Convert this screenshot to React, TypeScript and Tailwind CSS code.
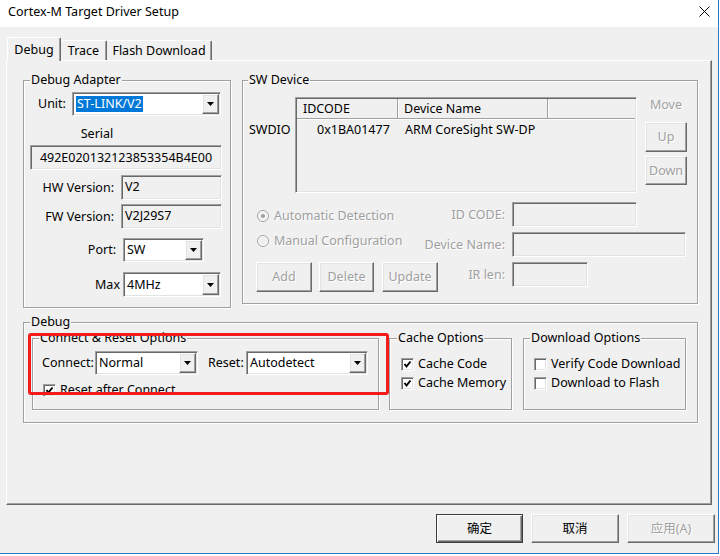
import React from "react";

const SUNKEN =
  "border border-t-[#a0a0a0] border-l-[#a0a0a0] border-r-white border-b-white shadow-[inset_1px_1px_0_#696969,inset_-1px_-1px_0_#e3e3e3]";
const RAISED =
  "border border-t-white border-l-white border-r-[#696969] border-b-[#696969] shadow-[inset_-1px_-1px_0_#a0a0a0,inset_1px_1px_0_#e3e3e3] bg-[#f0f0f0]";
const DIS = "text-[#a0a0a0] [text-shadow:1px_1px_0_#ffffff]";

function Arrow() {
  return (
    <svg width="7" height="4" viewBox="0 0 7 4">
      <polygon points="0,0 7,0 3.5,4" fill="#000" />
    </svg>
  );
}

function Combo({ className, children }: { className: string; children: React.ReactNode }) {
  return (
    <div className={`${SUNKEN} bg-white p-[1px] flex ${className}`}>
      <div className="flex-1 flex items-center pl-[2px] overflow-hidden whitespace-nowrap">{children}</div>
      <div className={`${RAISED} w-[17px] h-full flex items-center justify-center`}>
        <Arrow />
      </div>
    </div>
  );
}

function Group({
  className,
  label,
  legendClass,
  children,
}: {
  className: string;
  label: string;
  legendClass: string;
  children?: React.ReactNode;
}) {
  return (
    <div className={`relative border border-[#a0a0a0] shadow-[inset_1px_1px_0_#ffffff,1px_1px_0_#ffffff] ${className}`}>
      <span className={`absolute bg-[#f0f0f0] px-[1px] leading-[16px] whitespace-nowrap ${legendClass}`}>{label}</span>
      {children}
    </div>
  );
}

function Check({ checked }: { checked: boolean }) {
  return (
    <div className={`${SUNKEN} bg-white w-[13px] h-[13px] flex items-center justify-center shrink-0`}>
      {checked && (
        <svg width="9" height="9" viewBox="0 0 9 9">
          <polyline points="1.5,4 3.5,6.5 7.5,1.5" fill="none" stroke="#000" strokeWidth="2" />
        </svg>
      )}
    </div>
  );
}

function Radio({ on }: { on: boolean }) {
  return (
    <svg width="12" height="12" viewBox="0 0 12 12" className="shrink-0">
      <circle cx="6" cy="6" r="5.5" fill="#f0f0f0" stroke="#a0a0a0" />
      <circle cx="6" cy="6" r="4.5" fill="none" stroke="#fff" strokeWidth="0.6" />
      {on && <circle cx="6" cy="6" r="2" fill="#a0a0a0" />}
    </svg>
  );
}

function Btn({ className, children, def }: { className: string; children: React.ReactNode; def?: boolean }) {
  if (def) {
    return (
      <div
        className={`border border-[#3c3c3c] bg-[#f0f0f0] shadow-[inset_1px_1px_0_#ffffff,inset_-1px_-1px_0_#696969,inset_-2px_-2px_0_#a0a0a0] flex items-center justify-center ${className}`}
      >
        {children}
      </div>
    );
  }
  return <div className={`${RAISED} flex items-center justify-center ${className}`}>{children}</div>;
}

export default function App() {
  return (
    <div className="relative w-[720px] h-[556px] bg-white text-black text-[12.5px] leading-[16px] font-['Noto_Sans','Noto_Sans_CJK_SC',sans-serif]">
      <div className="w-[719px] h-[554px] border-r border-b border-[#2b79c2] bg-[#f0f0f0] flex flex-col">
        {/* title bar */}
        <div className="h-[27px] bg-white flex items-center justify-between pl-[8px] pr-[8px] pb-[4px] shrink-0">
          <span className="text-[12.5px]">Cortex-M Target Driver Setup</span>
          <svg width="11" height="11" viewBox="0 0 11 11">
            <line x1="0.5" y1="0.5" x2="10.5" y2="10.5" stroke="#000" strokeWidth="1" />
            <line x1="10.5" y1="0.5" x2="0.5" y2="10.5" stroke="#000" strokeWidth="1" />
          </svg>
        </div>

        <div className="flex-1 pt-[10px] pl-[6px]">
          {/* tabs */}
          <div className="relative z-10 flex items-end h-[23px] pl-[1px]">
            <div className="h-[24px] w-[54px] -mb-[1px] bg-[#f0f0f0] border-t border-l border-white border-r border-r-[#696969] shadow-[inset_-1px_0_0_#a0a0a0] rounded-t-[2px] flex items-center justify-center">
              Debug
            </div>
            <div className="h-[20px] w-[46px] border-t border-white border-r border-r-[#696969] shadow-[inset_-1px_0_0_#a0a0a0] rounded-t-[2px] flex items-center justify-center">
              Trace
            </div>
            <div className="h-[20px] w-[105px] border-t border-white border-r border-r-[#696969] shadow-[inset_-1px_0_0_#a0a0a0] rounded-t-[2px] flex items-center justify-center">
              Flash Download
            </div>
          </div>

          {/* panel */}
          <div className="w-[706px] h-[445px] border border-t-white border-l-white border-r-[#696969] border-b-[#696969] shadow-[inset_-1px_-1px_0_#a0a0a0] pt-[19px] pl-[16px]">
            <div className="flex items-start gap-[11px]">
              {/* Debug Adapter */}
              <Group className="w-[208px] h-[228px]" label="Debug Adapter" legendClass="left-[6px] -top-[9px]">
                <div className="flex flex-col">
                  <div className="mt-[11px] h-[24px] flex items-center pl-[14px]">
                    <span className="w-[34px]">Unit:</span>
                    <Combo className="w-[149px] h-[24px]">
                      <span className="bg-[#0078d7] text-white px-[1px]">ST-LINK/V2</span>
                    </Combo>
                  </div>
                  <div className="mt-[10px] h-[16px] w-[146px] text-center">Serial</div>
                  <div className={`${SUNKEN} mt-[3px] ml-[6px] w-[192px] h-[25px] flex items-center justify-center`}>
                    492E020132123853354B4E00
                  </div>
                  <div className="mt-[5px] h-[25px] flex">
                    <span className="w-[90px] text-right self-center">HW Version:</span>
                    <div className={`${SUNKEN} ml-[7px] w-[101px] h-[25px] pl-[3px] pt-[3px]`}>V2</div>
                  </div>
                  <div className="mt-[4px] h-[25px] flex">
                    <span className="w-[90px] text-right self-center">FW Version:</span>
                    <div className={`${SUNKEN} ml-[7px] w-[101px] h-[25px] pl-[3px] pt-[3px]`}>V2J29S7</div>
                  </div>
                  <div className="mt-[9px] h-[24px] flex items-center">
                    <span className="w-[92px] text-right">Port:</span>
                    <Combo className="ml-[7px] w-[81px] h-[24px]">SW</Combo>
                  </div>
                  <div className="mt-[10px] h-[25px] flex items-center">
                    <span className="w-[96px] text-right">Max</span>
                    <Combo className="ml-[3px] w-[98px] h-[25px]">4MHz</Combo>
                  </div>
                </div>
              </Group>

              {/* SW Device */}
              <Group className="w-[456px] h-[224px]" label="SW Device" legendClass="left-[5px] -top-[9px]">
                <div className="flex items-start h-[112px]">
                  <div className="w-[52px] pl-[6px] mt-[41px]">SWDIO</div>
                  <div className={`${SUNKEN} mt-[16px] w-[342px] h-[96px] p-[1px] flex flex-col`}>
                    <div className="flex h-[20px] shrink-0">
                      <div className="w-[101px] border-r border-b border-[#a0a0a0] shadow-[1px_1px_0_#ffffff] pl-[6px] flex items-center">
                        IDCODE
                      </div>
                      <div className="w-[150px] border-r border-b border-[#a0a0a0] shadow-[1px_1px_0_#ffffff] pl-[6px] flex items-center">
                        Device Name
                      </div>
                      <div className="flex-1 border-b border-[#a0a0a0] shadow-[0_1px_0_#ffffff]" />
                    </div>
                    <div className="flex mt-[3px] h-[16px]">
                      <div className="w-[101px] pl-[20px]">0x1BA01477</div>
                      <div className="pl-[7px]">ARM CoreSight SW-DP</div>
                    </div>
                  </div>
                  <div className="ml-[8px] w-[42px] flex flex-col items-center">
                    <div className={`mt-[16px] h-[16px] ${DIS}`}>Move</div>
                    <Btn className={`mt-[9px] w-[42px] h-[30px] ${DIS}`}>Up</Btn>
                    <Btn className={`mt-[4px] w-[42px] h-[29px] ${DIS}`}>Down</Btn>
                  </div>
                </div>

                <div className="mt-[9px] flex h-[25px]">
                  <div className="w-[262px] flex justify-between">
                    <div className={`pl-[14px] mt-[6px] h-[16px] flex items-center gap-[5px] ${DIS}`}>
                      <Radio on />
                      <span>Automatic Detection</span>
                    </div>
                    <span className={`self-center ${DIS}`}>ID CODE:</span>
                  </div>
                  <div className={`${SUNKEN} ml-[7px] w-[125px] h-[25px]`} />
                </div>
                <div className="mt-[5px] flex h-[25px]">
                  <div className="w-[262px] flex justify-between">
                    <div className={`pl-[14px] mt-[1px] h-[16px] flex items-center gap-[5px] ${DIS}`}>
                      <Radio on={false} />
                      <span>Manual Configuration</span>
                    </div>
                    <span className={`self-center ${DIS}`}>Device Name:</span>
                  </div>
                  <div className={`${SUNKEN} ml-[7px] w-[174px] h-[25px]`} />
                </div>
                <div className="mt-[5px] flex h-[30px] items-start">
                  <div className="w-[262px] flex justify-between">
                    <div className="pl-[13px] flex">
                      <Btn className={`w-[56px] h-[30px] ${DIS}`}>Add</Btn>
                      <Btn className={`ml-[7px] w-[55px] h-[30px] ${DIS}`}>Delete</Btn>
                      <Btn className={`ml-[8px] w-[56px] h-[30px] ${DIS}`}>Update</Btn>
                    </div>
                    <span className={`h-[25px] flex items-center ${DIS}`}>IR len:</span>
                  </div>
                  <div className={`${SUNKEN} ml-[7px] w-[76px] h-[25px]`} />
                </div>
              </Group>
            </div>

            {/* Debug */}
            <Group className="mt-[14px] w-[675px] h-[101px]" label="Debug" legendClass="left-[6px] -top-[9px]">
              <div className="flex pt-[15px] pl-[8px]">
                <Group className="w-[347px] h-[72px]" label="Connect & Reset Options" legendClass="left-[6px] -top-[9px]">
                  <div className="mt-[12px] h-[24px] flex items-center pl-[9px]">
                    <span className="w-[53px] whitespace-nowrap">Connect:</span>
                    <Combo className="w-[103px] h-[24px]">Normal</Combo>
                    <span className="ml-[10px] w-[38px]">Reset:</span>
                    <Combo className="w-[122px] h-[24px]">Autodetect</Combo>
                  </div>
                  <div className="mt-[7px] h-[16px] pl-[10px] flex items-center gap-[4px]">
                    <Check checked />
                    <span>Reset after Connect</span>
                  </div>
                </Group>
                <Group className="ml-[10px] w-[123px] h-[72px]" label="Cache Options" legendClass="left-[7px] -top-[9px]">
                  <div className="mt-[17px] h-[16px] pl-[11px] flex items-center gap-[4px]">
                    <Check checked />
                    <span className="whitespace-nowrap">Cache Code</span>
                  </div>
                  <div className="mt-[3px] h-[16px] pl-[11px] flex items-center gap-[4px]">
                    <Check checked />
                    <span className="whitespace-nowrap">Cache Memory</span>
                  </div>
                </Group>
                <Group className="ml-[11px] w-[163px] h-[72px]" label="Download Options" legendClass="left-[6px] -top-[9px]">
                  <div className="mt-[17px] h-[16px] pl-[10px] flex items-center gap-[4px] overflow-hidden">
                    <Check checked={false} />
                    <span className="whitespace-nowrap">Verify Code Download</span>
                  </div>
                  <div className="mt-[3px] h-[16px] pl-[10px] flex items-center gap-[4px]">
                    <Check checked={false} />
                    <span className="whitespace-nowrap">Download to Flash</span>
                  </div>
                </Group>
              </div>
            </Group>
          </div>

          {/* bottom buttons */}
          <div className="mt-[9px] flex pl-[430px] gap-[8px]">
            <Btn def className="w-[87px] h-[29px]">确定</Btn>
            <Btn className="w-[88px] h-[29px]">取消</Btn>
            <Btn className={`w-[88px] h-[29px] ${DIS}`}>应用(A)</Btn>
          </div>
        </div>
      </div>

      {/* red annotation */}
      <div className="absolute left-[28px] top-[333px] w-[361px] h-[62px] border-[3px] border-[#f21c1c] rounded-[3px]" />
    </div>
  );
}
